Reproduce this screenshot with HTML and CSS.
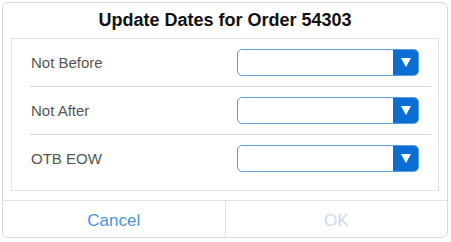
FILE: index.html
```html
<!DOCTYPE html>
<html lang="en">
<head>
    <meta charset="UTF-8">
    <meta name="viewport" content="width=device-width, initial-scale=1.0">
    <title>Update Dates</title>
    <link rel="stylesheet" href="styles.css">
</head>
<body>
    <div class="dialog">
        <h1 class="dialog-title">Update Dates for Order 54303</h1>
        <div class="fields">
            <div class="field-row">
                <span class="field-label">Not Before</span>
                <div class="picker"><span class="picker-value"></span><span class="picker-arrow"></span></div>
            </div>
            <div class="field-row">
                <span class="field-label">Not After</span>
                <div class="picker"><span class="picker-value"></span><span class="picker-arrow"></span></div>
            </div>
            <div class="field-row">
                <span class="field-label">OTB EOW</span>
                <div class="picker"><span class="picker-value"></span><span class="picker-arrow"></span></div>
            </div>
        </div>
        <div class="dialog-buttons">
            <button class="btn btn-cancel">Cancel</button>
            <button class="btn btn-ok" disabled>OK</button>
        </div>
    </div>
</body>
</html>
```

FILE: styles.css
```css
body {
    margin: 0;
    padding: 0;
    background: #fff;
    font-family: 'Liberation Sans', Arial, sans-serif;
}
.dialog {
    margin: 2px 3px 0 2px;
    height: 234px;
    border: 1px solid #d9d9d9;
    border-radius: 6px;
    background: #fff;
    display: flex;
    flex-direction: column;
}
.dialog-title {
    margin: 7px 0 8px;
    font-size: 18px;
    line-height: 20px;
    font-weight: bold;
    color: #111;
    text-align: center;
}
.fields {
    margin: 0 8px;
    border: 1px solid #dde5ea;
    padding-bottom: 8px;
}
.field-row {
    display: flex;
    align-items: center;
    justify-content: space-between;
    height: 47px;
    margin: 0 7px 0 18px;
    padding: 0 12px 0 1px;
    border-bottom: 1px solid #d6d6d6;
}
.field-row:last-child {
    border-bottom: none;
}
.field-label {
    font-size: 15px;
    color: #555;
}
.picker {
    display: flex;
    width: 182px;
    height: 27px;
    box-sizing: border-box;
    border: 1px solid #5d9fe6;
    border-radius: 5px;
    overflow: hidden;
    background: #fff;
}
.picker-value {
    flex: 1;
}
.picker-arrow {
    width: 25px;
    background: #0b6ed2;
    display: flex;
    align-items: center;
    justify-content: center;
}
.picker-arrow::after {
    content: "";
    border-left: 5px solid transparent;
    border-right: 5px solid transparent;
    border-top: 9px solid #fff;
}
.dialog-buttons {
    margin-top: 9px;
    flex: 1;
    display: flex;
    border-top: 1px solid #e3e3e3;
}
.btn {
    flex: 1;
    border: none;
    background: none;
    font-family: 'Liberation Sans', Arial, sans-serif;
    font-size: 17px;
    padding: 3px 0 0;
    cursor: pointer;
}
.btn-cancel {
    color: #4a93dc;
    border-right: 1px solid #e3e3e3;
}
.btn-ok {
    color: #c7dcf2;
}
```
